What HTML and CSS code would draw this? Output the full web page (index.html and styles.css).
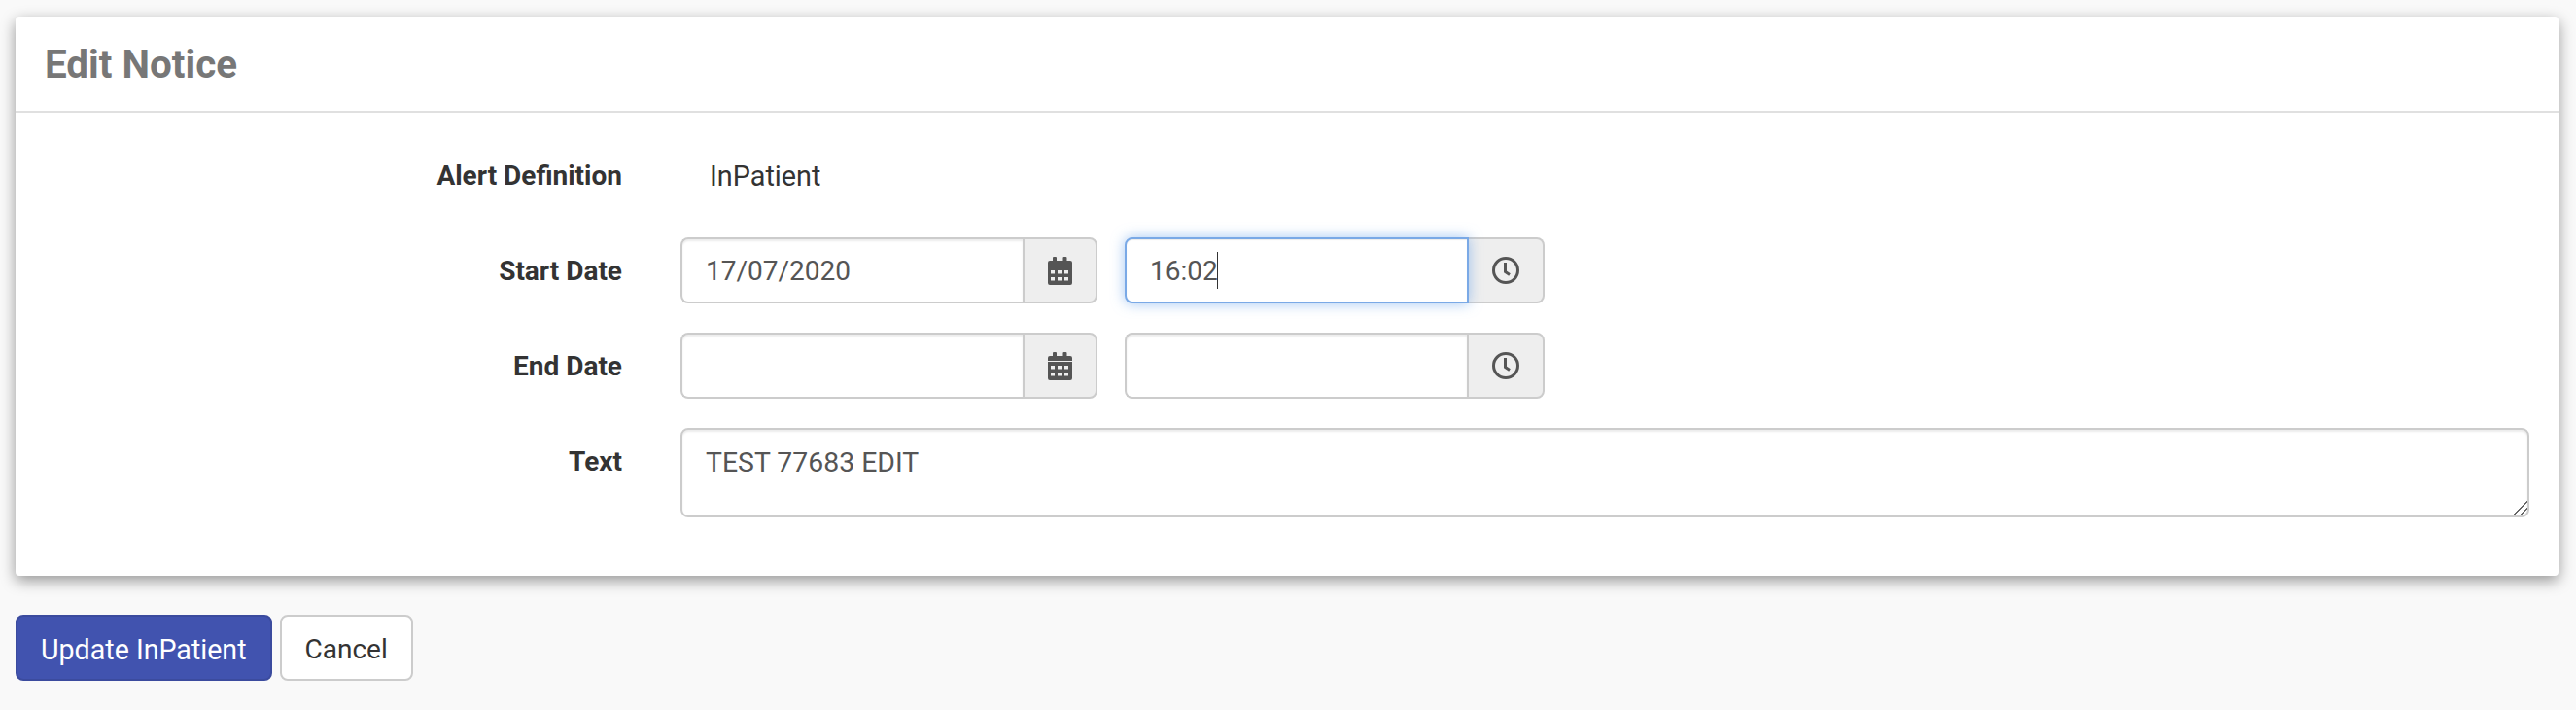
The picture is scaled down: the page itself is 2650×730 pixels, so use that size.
FILE: index.html
```html
<!DOCTYPE html>
<html lang="en">
<head>
    <meta charset="UTF-8">
    <meta name="viewport" content="width=device-width, initial-scale=1.0">
    <title>Edit Notice</title>
    <link rel="stylesheet" href="styles.css">
</head>
<body>
    <form class="page">
        <div class="card">
            <div class="card-header">
                <h1>Edit Notice</h1>
            </div>
            <div class="card-body">
                <div class="form-row">
                    <label>Alert Definition</label>
                    <div class="static-value">InPatient</div>
                </div>

                <div class="form-row">
                    <label>Start Date</label>
                    <div class="date-time">
                        <div class="input-group date-group">
                            <input type="text" value="17/07/2020">
                            <span class="addon">
                                <svg class="icon-calendar" viewBox="0 0 25 29"><path d="M6 0h2a1 1 0 0 1 1 1v3H5V1a1 1 0 0 1 1-1zM16.500 0h2a1 1 0 0 1 1 1v3h-4V1a1 1 0 0 1 1-1z"/><path d="M2 4h21a2 2 0 0 1 2 2v3H0V6a2 2 0 0 1 2-2z"/><path fill-rule="evenodd" d="M0 10h25v17a2 2 0 0 1-2 2H2a2 2 0 0 1-2-2zM3 14v3.500h4V14zM10 14v3.500h4V14zM17 14v3.500h4V14zM3 21v3.500h4V21zM10 21v3.500h4V21zM17 21v3.500h4V21z"/></svg>
                            </span>
                        </div>
                        <div class="input-group time-group is-focused">
                            <input type="text" value="16:02">
                            <span class="caret"></span>
                            <span class="addon">
                                <svg class="icon-clock" viewBox="0 0 28 28"><circle cx="14" cy="14" r="12.500"/><path d="M13.500 6v9.500l4.500 3"/></svg>
                            </span>
                        </div>
                    </div>
                </div>

                <div class="form-row">
                    <label>End Date</label>
                    <div class="date-time">
                        <div class="input-group date-group">
                            <input type="text">
                            <span class="addon">
                                <svg class="icon-calendar" viewBox="0 0 25 29"><path d="M6 0h2a1 1 0 0 1 1 1v3H5V1a1 1 0 0 1 1-1zM16.500 0h2a1 1 0 0 1 1 1v3h-4V1a1 1 0 0 1 1-1z"/><path d="M2 4h21a2 2 0 0 1 2 2v3H0V6a2 2 0 0 1 2-2z"/><path fill-rule="evenodd" d="M0 10h25v17a2 2 0 0 1-2 2H2a2 2 0 0 1-2-2zM3 14v3.500h4V14zM10 14v3.500h4V14zM17 14v3.500h4V14zM3 21v3.500h4V21zM10 21v3.500h4V21zM17 21v3.500h4V21z"/></svg>
                            </span>
                        </div>
                        <div class="input-group time-group">
                            <input type="text">
                            <span class="addon">
                                <svg class="icon-clock" viewBox="0 0 28 28"><circle cx="14" cy="14" r="12.500"/><path d="M13.500 6v9.500l4.500 3"/></svg>
                            </span>
                        </div>
                    </div>
                </div>

                <div class="form-row">
                    <label>Text</label>
                    <textarea>TEST 77683 EDIT</textarea>
                </div>
            </div>
        </div>

        <div class="actions">
            <button type="submit" class="btn btn-primary">Update InPatient</button>
            <button type="button" class="btn btn-default">Cancel</button>
        </div>
    </form>
</body>
</html>
```

FILE: styles.css
```css
* {
    box-sizing: border-box;
    margin: 0;
    padding: 0;
}

body {
    font-family: Roboto, Arial, sans-serif;
    font-size: 28px;
    line-height: 40px;
    background: #f9f9f9;
    color: #333;
}

.page {
    padding: 17px 18px 0 16px;
}

.card {
    background: white;
    border-radius: 4px;
    box-shadow: 0 5px 15px rgba(0,0,0,0.4);
}

.card-header {
    height: 99px;
    padding: 2px 30px 0;
    display: flex;
    align-items: center;
    border-bottom: 2px solid #e0e0e0;
}

h1 {
    font-size: 40.4px;
    font-weight: 700;
    color: #777;
}

.card-body {
    padding: 30px 30px 60px 30px;
    display: flex;
    flex-direction: column;
    gap: 30px;
}

.form-row {
    display: flex;
    gap: 60px;
}

label {
    width: 594px;
    flex-shrink: 0;
    padding-top: 15px;
    text-align: right;
    font-weight: 700;
}

.static-value {
    padding: 15px 0 13px 30px;
    font-size: 28.8px;
}

.date-time {
    display: flex;
    gap: 28px;
}

.input-group {
    position: relative;
    display: flex;
    height: 68px;
}

.date-group {
    width: 429px;
}

.time-group {
    width: 432px;
}

.input-group input {
    flex: 1;
    min-width: 0;
    padding: 2px 24px 0;
    border: 2px solid #ccc;
    border-right: none;
    border-radius: 8px 0 0 8px;
    box-shadow: inset 0 2px 2px rgba(0,0,0,0.08);
    font: inherit;
    color: #555;
    outline: none;
}

.addon {
    width: 77px;
    flex-shrink: 0;
    display: flex;
    align-items: center;
    justify-content: center;
    background: #eee;
    border: 2px solid #ccc;
    border-radius: 0 8px 8px 0;
}

.time-group .addon {
    width: 80px;
}

.is-focused input {
    border: 2px solid #7aa9e6;
    box-shadow: inset 0 1px 1px rgba(0,0,0,0.08), 0 0 14px rgba(102,160,233,0.6);
    position: relative;
}

.time-group.is-focused .addon {
    width: 78px;
    border-left: none;
}

.caret {
    position: absolute;
    left: 95px;
    top: 15px;
    width: 1px;
    height: 38px;
    background: #333;
}

.icon-calendar {
    width: 25px;
    height: 29px;
    fill: #555;
}

.icon-clock {
    width: 28px;
    height: 28px;
    fill: none;
    stroke: #555;
    stroke-width: 3;
}

textarea {
    flex: 1;
    height: 92px;
    padding: 14px 24px;
    border: 2px solid #ccc;
    border-radius: 8px;
    box-shadow: inset 0 2px 2px rgba(0,0,0,0.08);
    font: inherit;
    font-size: 28.4px;
    color: #555;
    outline: none;
}

textarea::-webkit-resizer {
    background: linear-gradient(135deg, transparent 49%, #666 49%, #666 54%, transparent 54%, transparent 73%, #666 73%, #666 78%, transparent 78%);
}

.actions {
    display: flex;
    gap: 8px;
    margin-top: 40px;
}

.btn {
    height: 68px;
    padding: 3px 24px 0;
    border-radius: 8px;
    font: inherit;
    cursor: pointer;
}

.btn-primary {
    background: #4153af;
    border: 2px solid #3b4b9e;
    color: white;
    font-size: 28.6px;
}

.btn-default {
    background: white;
    border: 2px solid #ccc;
    color: #333;
}
```
